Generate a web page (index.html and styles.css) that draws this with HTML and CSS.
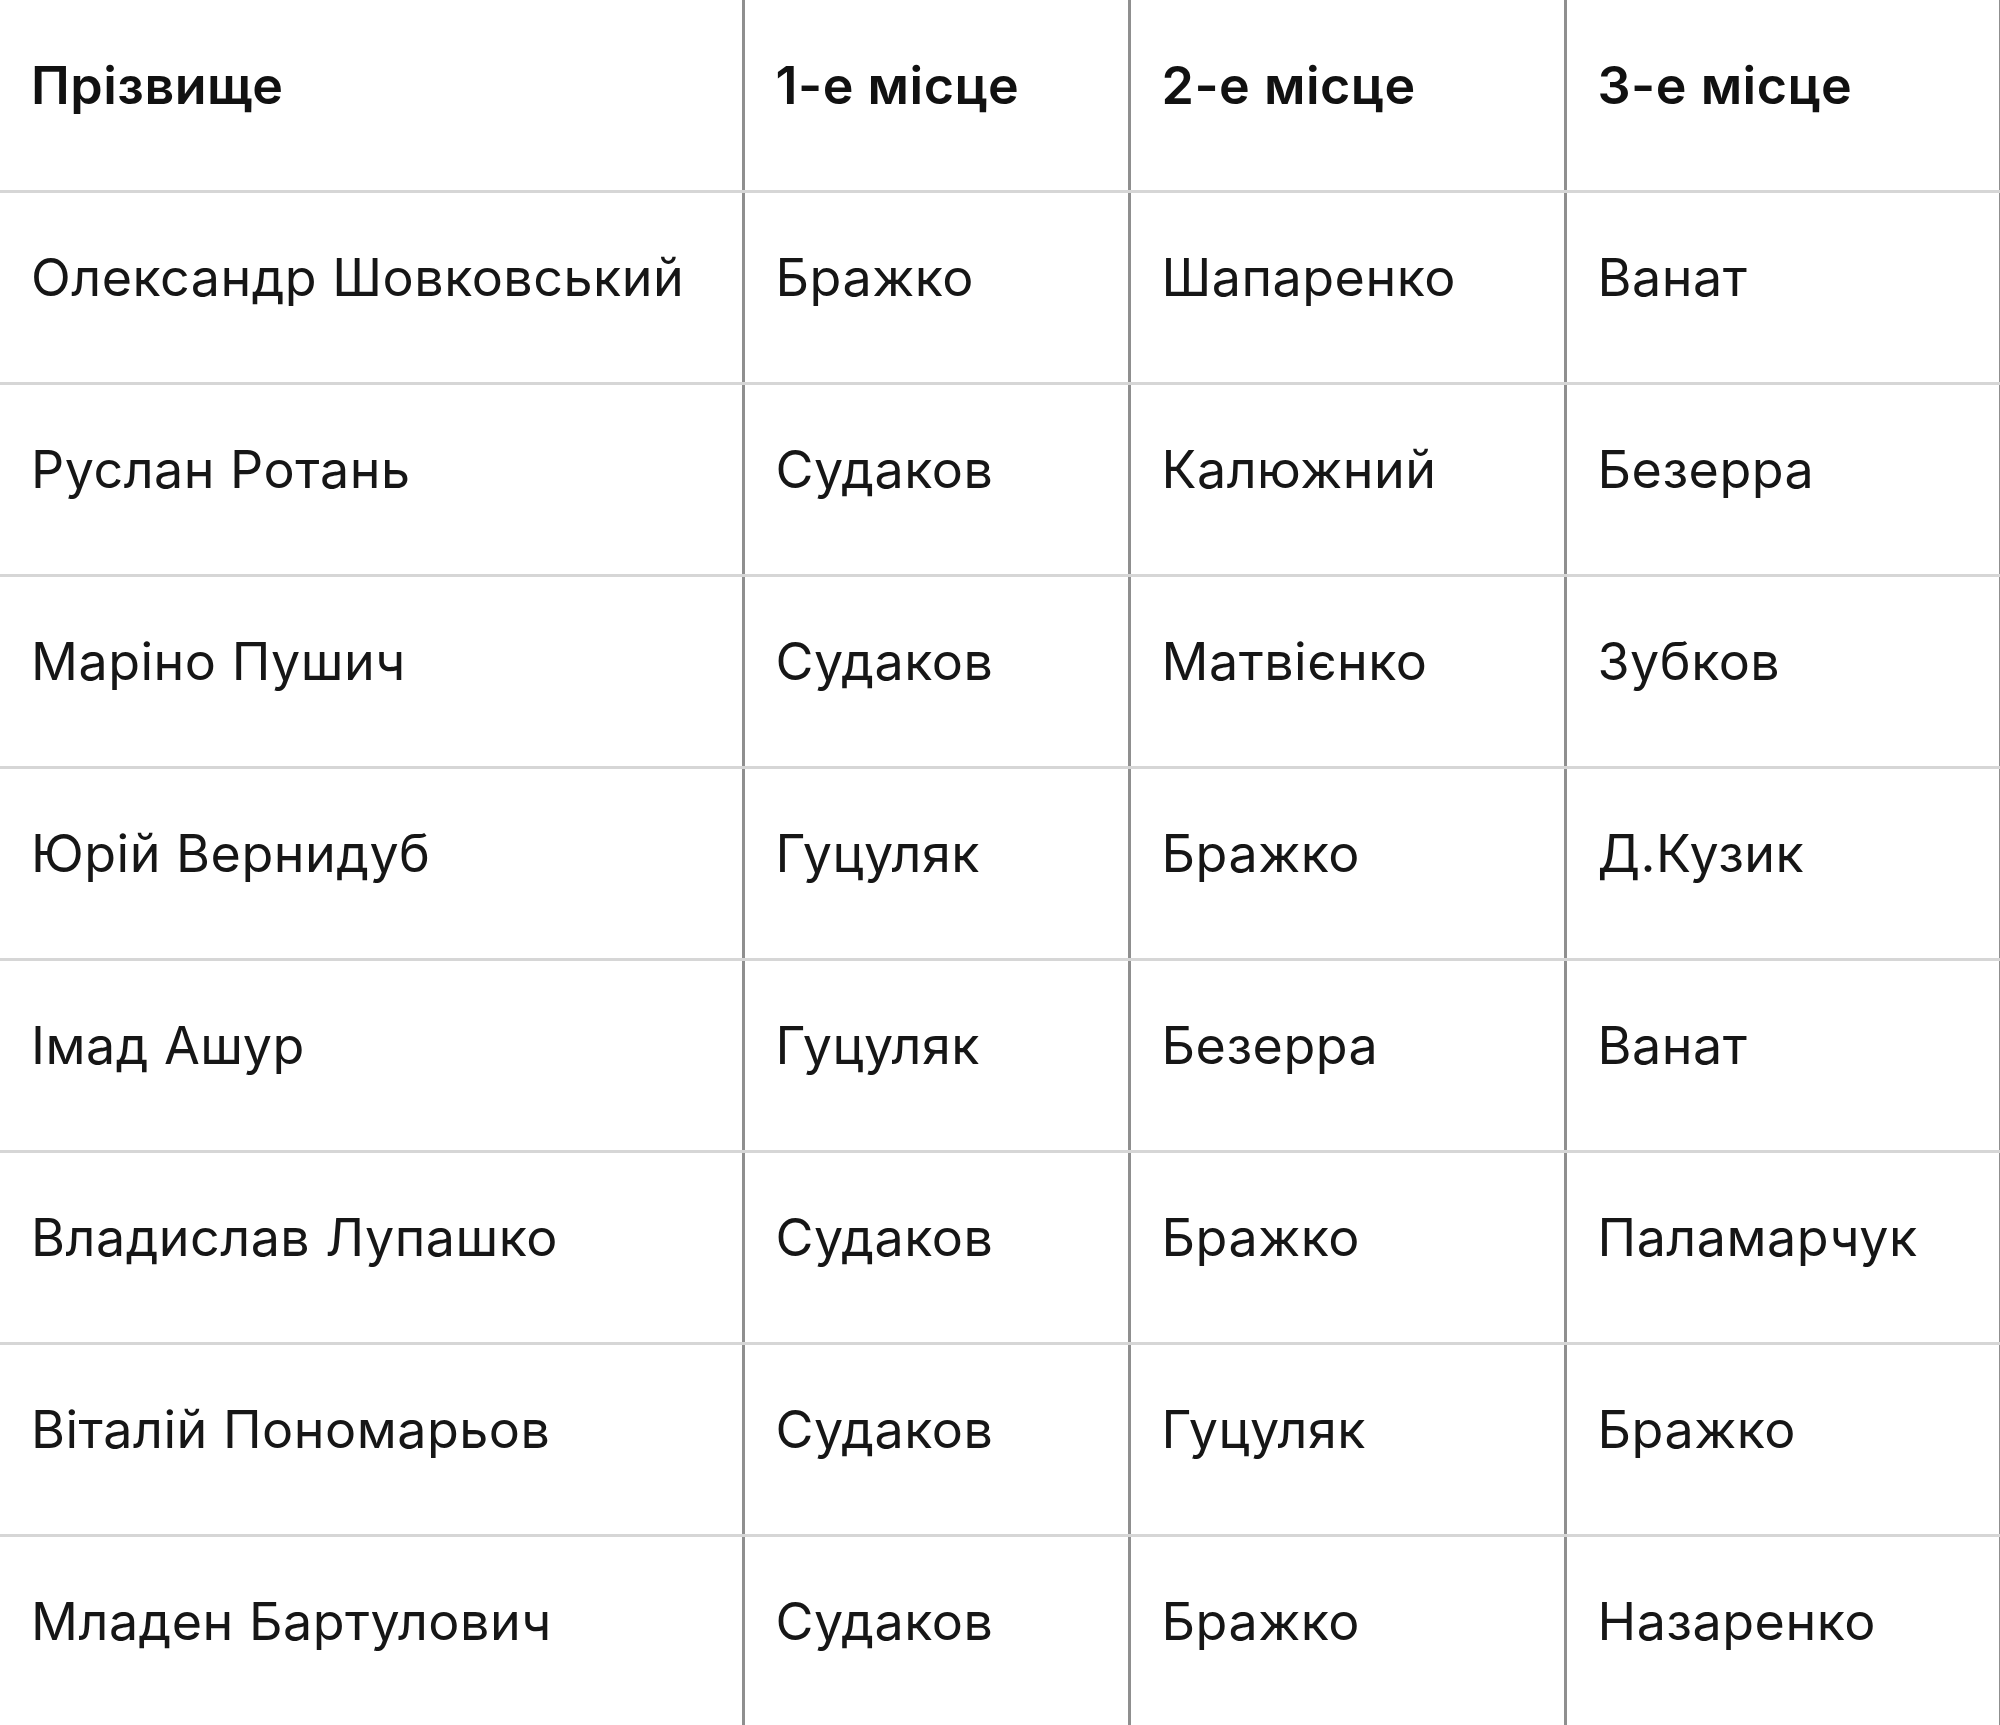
FILE: index.html
```html
<!DOCTYPE html>
<html lang="uk">
<head>
<meta charset="utf-8">
<title>Таблиця</title>
<link rel="stylesheet" href="styles.css">
</head>
<body>
<table class="results">
  <colgroup>
    <col class="c1"><col class="c2"><col class="c3"><col class="c4">
  </colgroup>
  <thead>
    <tr><th>Прізвище</th><th>1-е місце</th><th>2-е місце</th><th>3-е місце</th></tr>
  </thead>
  <tbody>
    <tr><td>Олександр Шовковський</td><td>Бражко</td><td>Шапаренко</td><td>Ванат</td></tr>
    <tr><td>Руслан Ротань</td><td>Судаков</td><td>Калюжний</td><td>Безерра</td></tr>
    <tr><td>Маріно Пушич</td><td>Судаков</td><td>Матвієнко</td><td>Зубков</td></tr>
    <tr><td>Юрій Вернидуб</td><td>Гуцуляк</td><td>Бражко</td><td>Д.Кузик</td></tr>
    <tr><td>Імад Ашур</td><td>Гуцуляк</td><td>Безерра</td><td>Ванат</td></tr>
    <tr><td>Владислав Лупашко</td><td>Судаков</td><td>Бражко</td><td>Паламарчук</td></tr>
    <tr><td>Віталій Пономарьов</td><td>Судаков</td><td>Гуцуляк</td><td>Бражко</td></tr>
    <tr><td>Младен Бартулович</td><td>Судаков</td><td>Бражко</td><td>Назаренко</td></tr>
  </tbody>
</table>
</body>
</html>
```
FILE: styles.css
```css
html, body {
  margin: 0;
  padding: 0;
  background: #ffffff;
}
body {
  font-family: Inter, "Noto Sans", "Liberation Sans", sans-serif;
  color: #161616;
  overflow: hidden;
}
.results {
  border-collapse: collapse;
  table-layout: fixed;
  width: 2000px;
}
.results col.c1 { width: 743px; }
.results col.c2 { width: 386px; }
.results col.c3 { width: 436px; }
.results col.c4 { width: 435px; }
.results th,
.results td {
  height: 192px;
  box-sizing: border-box;
  padding: 0 10px 18px 31px;
  text-align: left;
  vertical-align: middle;
  font-size: 52px;
  letter-spacing: 0.5px;
  line-height: 1.2;
  border-bottom: 3px solid #d6d6d6;
  border-right: 3px solid #8f8f8f;
  white-space: nowrap;
}
.results th {
  height: 191px;
  font-weight: 600;
  color: #111111;
}
.results td {
  font-weight: 400;
}
```
